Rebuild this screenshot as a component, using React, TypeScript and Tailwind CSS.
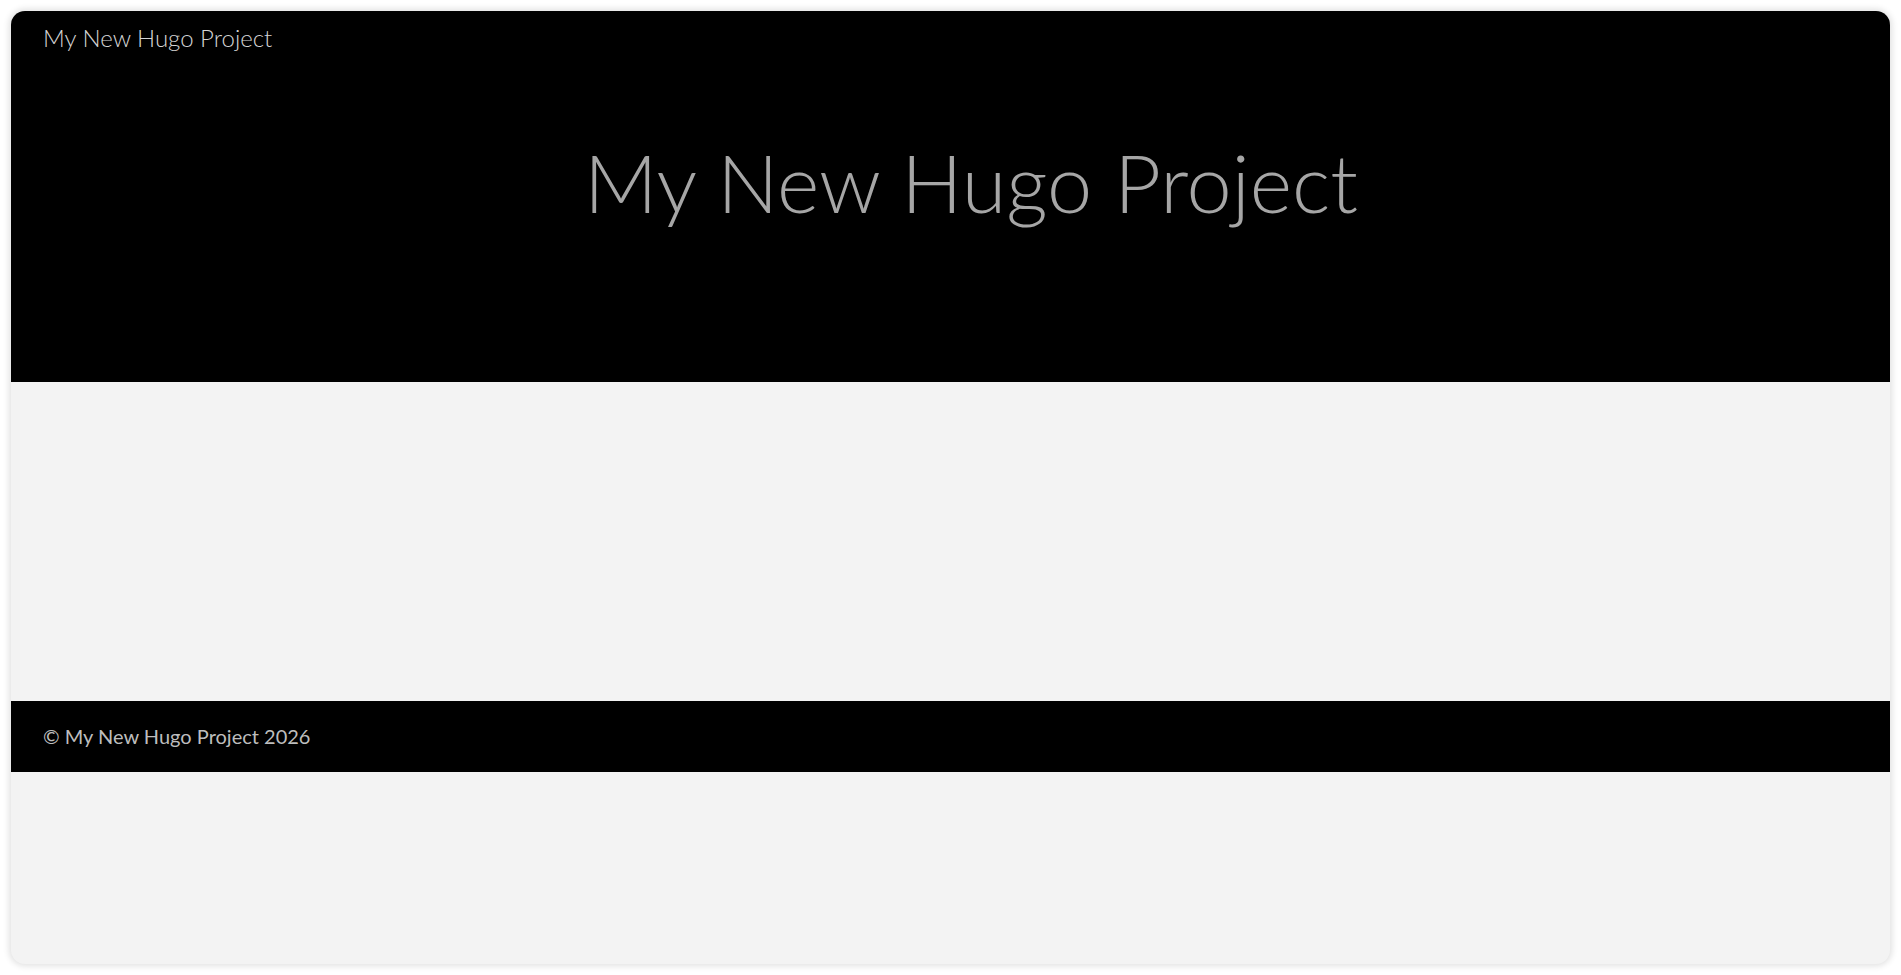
export default function App() {
  return (
    <div className="h-screen w-full bg-white p-[11px] font-['Lato','Noto_Sans',sans-serif]">
      <div className="flex h-full flex-col overflow-hidden rounded-[14px] bg-[#f3f3f3] shadow-[0_0_6px_2px_rgba(0,0,0,0.12)]">
        {/* header with nav and title */}
        <header className="flex h-[371px] shrink-0 flex-col bg-black">
          <nav className="px-8 pt-[9px]">
            <a className="text-[24px] leading-[36px] font-light text-[#d4d4d4]">My New Hugo Project</a>
          </nav>
          <h1 className="mt-[85px] pl-[41px] text-center text-[81px] leading-[81px] font-light text-[#a6a6a6]">
            My New Hugo Project
          </h1>
        </header>

        <main className="h-[319px] shrink-0" />

        <footer className="shrink-0 bg-black px-8 py-5">
          <p className="text-[20px] leading-[31px] text-[#bdbdbd]">© My New Hugo Project 2026</p>
        </footer>
      </div>
    </div>
  )
}
